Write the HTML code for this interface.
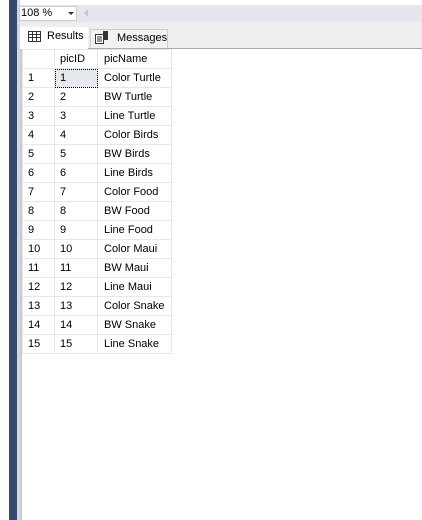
<!DOCTYPE html><html><head><style>
body{margin:0;width:422px;height:520px;overflow:hidden;background:#fff;font-family:"Liberation Sans",sans-serif;font-size:11px;color:#000;position:relative}
.a{position:absolute}
table{border-collapse:collapse;position:absolute;left:22px;top:49px}
td{height:19px;border:1px solid #e8e8e8;padding:0;vertical-align:middle;white-space:nowrap}
td.n{width:32px;padding-left:5px;box-sizing:border-box}
td.i{width:43px;padding-left:5px;box-sizing:border-box}
td.p{width:74px;padding-left:6px;box-sizing:border-box}
</style></head><body>
<div class="a" style="left:9px;top:0;width:8px;height:520px;background:#364a6e"></div>
<div class="a" style="left:17px;top:0;width:3px;height:520px;background:#d5d7dd"></div>
<div class="a" style="left:20px;top:5px;width:402px;height:17px;background:#e6e6ec"></div>
<div class="a" style="left:20px;top:22px;width:402px;height:26px;background:#eeeeee"></div>
<div class="a" style="left:20px;top:48px;width:402px;height:1px;background:#aaa"></div>
<div class="a" style="left:20px;top:48px;width:2px;height:472px;background:#ccc"></div>
<div class="a" style="left:19px;top:6px;width:58px;height:15px;background:#fff;border:1px solid #ccc;box-sizing:border-box"></div>
<div class="a" style="left:21px;top:7px;font-size:11px">108 %</div>
<div class="a" style="left:68px;top:12px;width:0;height:0;border-left:3px solid transparent;border-right:3px solid transparent;border-top:3px solid #333"></div>
<div class="a" style="left:84px;top:9px;width:0;height:0;border-top:4px solid transparent;border-bottom:4px solid transparent;border-right:4px solid #c8c8c8"></div>
<div class="a" style="left:20px;top:27px;width:68px;height:22px;background:#fff"></div>
<svg class="a" style="left:28px;top:31px" width="13" height="11"><rect x="0.5" y="0.5" width="12" height="10" fill="#fff" stroke="#333"/><path d="M0 3.5H13M0 6.5H13M4.5 0V11M8.5 0V11" stroke="#333"/></svg>
<div class="a" style="left:47px;top:30px">Results</div>
<div class="a" style="left:90px;top:29px;width:78px;height:19px;background:#f2f2f2;border:1px solid #ccc;border-bottom:none;box-sizing:border-box"></div>
<svg class="a" style="left:95px;top:31px" width="14" height="13"><rect x="0.5" y="3.5" width="8" height="9" fill="#fff" stroke="#333"/><path d="M2 6H7M2 8H7M2 10H7" stroke="#333"/><rect x="8" y="0" width="5" height="9" fill="#333"/></svg>
<div class="a" style="left:117px;top:32px">Messages</div>
<table>
<tr><td class="n"></td><td class="i">picID</td><td class="p">picName</td></tr>
<tr><td class="n">1</td><td class="i" style="background:#e6eaee;outline:1px dotted #000;outline-offset:-1px">1</td><td class="p">Color Turtle</td></tr>
<tr><td class="n">2</td><td class="i">2</td><td class="p">BW Turtle</td></tr>
<tr><td class="n">3</td><td class="i">3</td><td class="p">Line Turtle</td></tr>
<tr><td class="n">4</td><td class="i">4</td><td class="p">Color Birds</td></tr>
<tr><td class="n">5</td><td class="i">5</td><td class="p">BW Birds</td></tr>
<tr><td class="n">6</td><td class="i">6</td><td class="p">Line Birds</td></tr>
<tr><td class="n">7</td><td class="i">7</td><td class="p">Color Food</td></tr>
<tr><td class="n">8</td><td class="i">8</td><td class="p">BW Food</td></tr>
<tr><td class="n">9</td><td class="i">9</td><td class="p">Line Food</td></tr>
<tr><td class="n">10</td><td class="i">10</td><td class="p">Color Maui</td></tr>
<tr><td class="n">11</td><td class="i">11</td><td class="p">BW Maui</td></tr>
<tr><td class="n">12</td><td class="i">12</td><td class="p">Line Maui</td></tr>
<tr><td class="n">13</td><td class="i">13</td><td class="p">Color Snake</td></tr>
<tr><td class="n">14</td><td class="i">14</td><td class="p">BW Snake</td></tr>
<tr><td class="n">15</td><td class="i">15</td><td class="p">Line Snake</td></tr>
</table>
</body></html>
